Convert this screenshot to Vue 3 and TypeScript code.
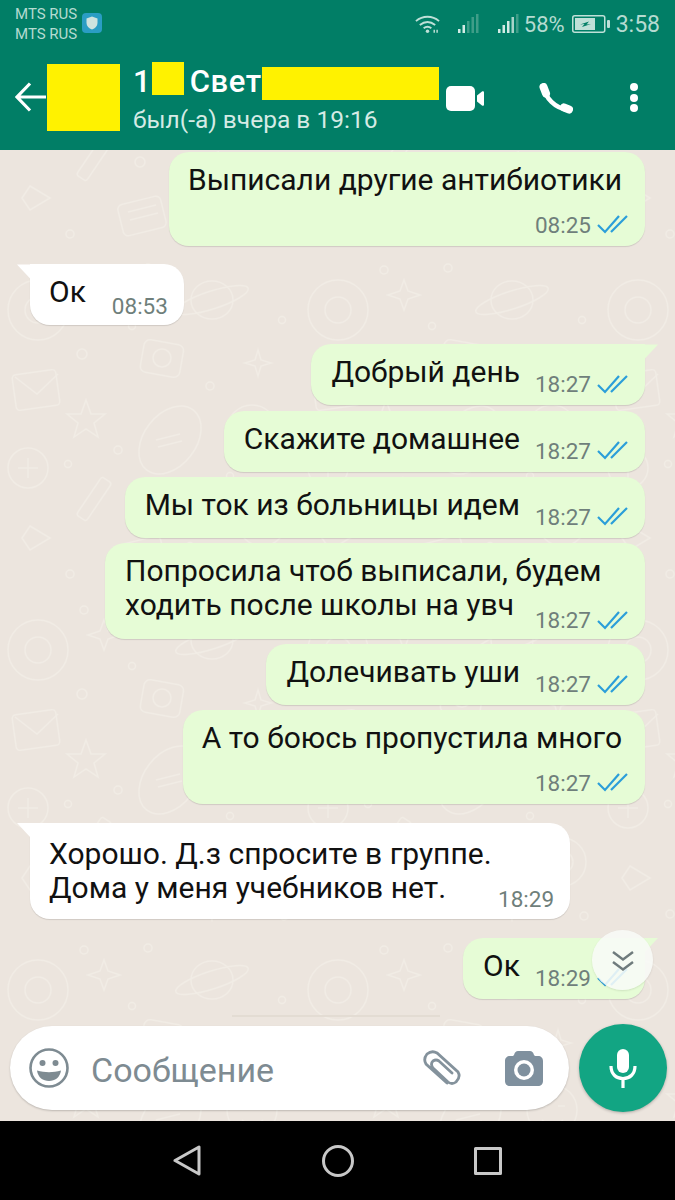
<template>
  <div class="phone">
    <header class="top">
      <div class="status">
        <div class="carriers">
          <div>MTS RUS</div>
          <div>MTS RUS</div>
        </div>
        <svg class="shield" viewBox="0 0 20 20">
          <rect width="20" height="20" rx="4" fill="#2a9dc4" />
          <path d="M10 3.500l5.500 2v4.500c0 3.200-2.400 5.400-5.500 6.500-3.100-1.100-5.500-3.300-5.500-6.500V5.500z" fill="#cfe3df" />
        </svg>
        <div class="status-right">
          <svg class="wifi" viewBox="0 0 26 20" fill="none" stroke="#bfe0d8" stroke-width="2">
            <path d="M1 7c7-6 17-6 24 0M5 11c5-4 11-4 16 0M9 14.500c2.500-2 5.500-2 8 0" />
            <circle cx="13" cy="17.500" r="1.800" fill="#bfe0d8" stroke="none" />
            <path d="M20 19v-3M23 19v-3" stroke-width="1.500" />
          </svg>
          <svg class="signal first" viewBox="0 0 21 20">
            <rect x="0" y="15" width="2.500" height="4" fill="#d3ebe5" />
            <rect x="4.500" y="11" width="2.500" height="8" fill="#d3ebe5" />
            <rect x="9" y="7" width="2.500" height="12" fill="#3f9d88" />
            <rect x="13.500" y="3" width="2.500" height="16" fill="#3f9d88" />
            <rect x="18" y="0" width="2.500" height="19" fill="#3f9d88" />
          </svg>
          <svg class="signal second" viewBox="0 0 21 20">
            <rect x="0" y="15" width="2.500" height="4" fill="#d3ebe5" />
            <rect x="4.500" y="11" width="2.500" height="8" fill="#d3ebe5" />
            <rect x="9" y="7" width="2.500" height="12" fill="#d3ebe5" />
            <rect x="13.500" y="3" width="2.500" height="16" fill="#a8d3c8" />
            <rect x="18" y="0" width="2.500" height="19" fill="#3f9d88" />
          </svg>
          <span class="percent">58%</span>
          <svg class="battery" viewBox="0 0 38 18">
            <rect x="0.750" y="0.750" width="32" height="16.500" rx="2" fill="none" stroke="#bfe0d8" stroke-width="1.500" />
            <rect x="3" y="3" width="20" height="12" fill="#bfe0d8" />
            <rect x="35" y="5" width="3" height="8" rx="1" fill="#bfe0d8" />
            <path d="M8 9.500l9-3-2.500 3 4.500-.5-9 3 2.500-3z" fill="#017e66" />
          </svg>
          <span class="clock">3:58</span>
        </div>
      </div>
      <div class="bar">
        <svg class="back" viewBox="0 0 32 30" fill="none" stroke="#fff" stroke-width="3.200">
          <path d="M31 15H2M15 1.500L2 15l13 13.500" />
        </svg>
        <div class="avatar" />
        <div class="title">
          <div class="name">
            <span>1</span>
            <i class="mark mark-short" />
            <span class="name-part">Свет</span>
            <i class="mark mark-long" />
          </div>
          <div class="seen">был(-а) вчера в 19:16</div>
        </div>
        <svg class="video" viewBox="0 0 38 25">
          <rect width="29" height="25" rx="5" fill="#fff" />
          <path d="M31 9.500l5-4c1-.7 2-.2 2 1v12c0 1.200-1 1.700-2 1l-5-4z" fill="#fff" />
        </svg>
        <svg class="call" viewBox="0 0 34 31" fill="none" stroke="#fff" stroke-linecap="round">
          <path d="M5 4c1 11 11 21 24 23" stroke-width="4.500" />
          <path d="M4.500 4l2.500 6.500M25 24.500l5 2" stroke-width="8" />
        </svg>
        <div class="dots"><i /><i /><i /></div>
      </div>
    </header>

    <main class="chat">
      <svg class="doodles" width="100%" height="100%">
        <defs>
          <pattern id="doodle" width="300" height="340" patternUnits="userSpaceOnUse" x="0" y="100">
            <g fill="none" stroke="#f1ece5" stroke-width="1.500">
              <circle cx="38" cy="60" r="30" />
              <circle cx="38" cy="60" r="13" />
              <path d="M104 30l4 11 12 4-12 4-4 11-4-11-12-4 12-4z" />
              <ellipse cx="212" cy="50" rx="21" ry="19" />
              <ellipse cx="212" cy="50" rx="38" ry="9" transform="rotate(-18 212 50)" />
              <rect x="142" y="92" width="40" height="33" rx="6" transform="rotate(10 162 108)" />
              <circle cx="162" cy="108" r="9" />
              <path d="M258 100l3 10 10 3-10 3-3 10-3-10-10-3 10-3z" />
              <rect x="14" y="122" width="44" height="36" rx="4" transform="rotate(-8 36 140)" />
              <path d="M15 127l22 17 21-20" />
              <path d="M86 150l5 14h14l-11 9 4 14-12-8-12 8 4-14-11-9h14z" />
              <ellipse cx="170" cy="190" rx="26" ry="38" transform="rotate(38 170 190)" />
              <path d="M156 190l24-6M158 197l24-6" />
              <circle cx="252" cy="180" r="25" />
              <path d="M240 176h7M258 176h7M242 190c6 6 15 6 21 0" />
              <circle cx="28" cy="218" r="20" />
              <path d="M18 218h20M28 208v20" />
              <rect x="88" y="226" width="12" height="46" rx="3" transform="rotate(34 94 249)" />
              <path d="M186 256l32-14-10 34-6-13z" />
              <circle cx="262" cy="272" r="24" />
              <circle cx="262" cy="272" r="11" />
              <path d="M30 276l20 12-20 12-8-12z" />
              <rect x="120" y="290" width="44" height="32" rx="5" transform="rotate(-14 142 306)" />
              <path d="M128 302l28-7M130 310l28-7" />
              <path d="M212 306l3 9 9 3-9 3-3 9-3-9-9-3 9-3z" />
              <circle cx="84" cy="20" r="4" />
              <circle cx="132" cy="76" r="3.500" />
              <circle cx="82" cy="104" r="5" />
              <circle cx="282" cy="70" r="3.500" />
              <circle cx="148" cy="18" r="4" />
              <circle cx="118" cy="200" r="4" />
              <circle cx="68" cy="214" r="3.500" />
              <circle cx="210" cy="136" r="4" />
              <circle cx="140" cy="252" r="5" />
              <circle cx="70" cy="324" r="4" />
              <circle cx="230" cy="226" r="3.500" />
              <circle cx="284" cy="326" r="4" />
              <circle cx="190" cy="296" r="3.500" />
            </g>
          </pattern>
        </defs>
        <rect width="100%" height="100%" fill="url(#doodle)" />
      </svg>

      <div class="messages">
        <div
          v-for="(msg, index) in messages"
          :key="index"
          class="bubble"
          :class="{ out: msg.out, tail: msg.tail, spaced: msg.spaced, stacked: msg.stacked, tall: msg.tall }"
        >
          <div v-if="msg.lead" class="text lead">{{ msg.lead }}</div>
          <div class="row" :style="{ gap: (msg.gap ?? 15) + 'px' }">
            <div class="text">{{ msg.text }}</div>
            <div class="meta">
              <span>{{ msg.time }}</span>
              <svg v-if="msg.out" class="ticks" viewBox="0 0 31 19" fill="none" stroke="#2b9ed9" stroke-width="2.200">
                <path d="M1 10l7 7L22 1M14 17L30 1" />
              </svg>
            </div>
          </div>
        </div>
      </div>

      <div class="to-bottom">
        <svg viewBox="0 0 22 20" fill="none" stroke="#6f7b7c" stroke-width="2.400">
          <path d="M1 1l10 7.500L21 1M1 11l10 7.500L21 11" />
        </svg>
      </div>

      <div class="composer">
        <i class="divider" />
        <div class="field">
          <svg class="smile" viewBox="0 0 40 40">
            <circle cx="20" cy="20" r="18.500" fill="none" stroke="#7e8b92" stroke-width="2.600" />
            <circle cx="13.500" cy="15" r="3" fill="#7e8b92" />
            <circle cx="26.500" cy="15" r="3" fill="#7e8b92" />
            <path d="M8 22.500c8 2.200 16 2.200 24 0-1 7-6 10.500-12 10.500S9 29.500 8 22.500z" fill="#7e8b92" />
          </svg>
          <span class="placeholder">Сообщение</span>
          <svg class="clip" viewBox="0 0 40 36" fill="none" stroke="#84929c" stroke-width="2.800" stroke-linecap="round">
            <path d="M25 33L4 14Q1 9 5 4Q10 0 15 3L36 22Q39 27 34 32Q30 35 26 32L11 18Q8 14 11 11Q14 9 17 11L30 23" />
          </svg>
          <svg class="camera" viewBox="0 0 38 35">
            <path
              d="M13 0h12c2 0 3 1 4 4l1 1h3c3 0 5 2 5 5v20c0 3-2 5-5 5H5c-3 0-5-2-5-5V10c0-3 2-5 5-5h3l1-1c1-3 2-4 4-4z"
              fill="#7f909e"
            />
            <circle cx="19" cy="19" r="10" fill="#fff" />
            <circle cx="19" cy="19" r="6.500" fill="#7f909e" />
          </svg>
        </div>
        <div class="mic">
          <svg viewBox="0 0 28 40" fill="none" stroke="#fff" stroke-width="3.200">
            <rect x="8" y="1" width="12" height="24" rx="6" fill="#fff" stroke="none" />
            <path d="M2 18c0 8 5 12.500 12 12.500S26 26 26 18M14 30v10" />
          </svg>
        </div>
      </div>
    </main>

    <nav class="nav">
      <svg viewBox="0 0 28 31" class="nav-back" fill="none" stroke="#c8c8c8" stroke-width="3" stroke-linejoin="round">
        <path d="M26 2v27L2 15.500z" />
      </svg>
      <svg viewBox="0 0 32 32" class="nav-home" fill="none" stroke="#c8c8c8" stroke-width="3">
        <circle cx="16" cy="16" r="14.500" />
      </svg>
      <svg viewBox="0 0 28 28" class="nav-recent" fill="none" stroke="#c8c8c8" stroke-width="3" stroke-linejoin="round">
        <rect x="1.500" y="1.500" width="25" height="25" />
      </svg>
    </nav>
  </div>
</template>

<script setup lang="ts">
interface Message {
  lead?: string
  text: string
  time: string
  gap?: number
  out?: boolean
  tail?: boolean
  spaced?: boolean
  stacked?: boolean
  tall?: boolean
}

const messages: Message[] = [
  { text: 'Выписали другие антибиотики', time: '08:25', out: true, stacked: true },
  { text: 'Ок', time: '08:53', tail: true, spaced: true, gap: 26 },
  { text: 'Добрый день', time: '18:27', out: true, tail: true, spaced: true },
  { text: 'Скажите домашнее', time: '18:27', out: true },
  { text: 'Мы ток из больницы идем', time: '18:27', out: true },
  { lead: 'Попросила чтоб выписали, будем', text: 'ходить после школы на увч', time: '18:27', out: true, gap: 21 },
  { text: 'Долечивать уши', time: '18:27', out: true },
  { text: 'А то боюсь пропустила много', time: '18:27', out: true, stacked: true },
  { lead: 'Хорошо. Д.з спросите в группе.', text: 'Дома у меня учебников нет.', time: '18:29', tail: true, spaced: true, tall: true, gap: 52 },
  { text: 'Ок', time: '18:29', out: true, tail: true, spaced: true },
]
</script>

<style>
html,
body {
  margin: 0;
  background: #000;
}
</style>

<style scoped>
.phone {
  display: flex;
  flex-direction: column;
  width: 675px;
  height: 1200px;
  overflow: hidden;
  font-family: Roboto, "Noto Sans", sans-serif;
}

.top {
  height: 150px;
  flex: none;
  background: #017e66;
  color: #fff;
}

.status {
  display: flex;
  align-items: flex-start;
  height: 56px;
  padding: 3px 15px 0;
  box-sizing: border-box;
  color: #b5dbd1;
}

.carriers {
  font-size: 15px;
  line-height: 20px;
  padding-top: 1px;
  width: 67px;
}

.shield {
  width: 20px;
  height: 20px;
  margin-top: 10px;
}

.status-right {
  display: flex;
  align-items: center;
  margin-left: auto;
  height: 42px;
}

.wifi {
  width: 25px;
  height: 20px;
}

.signal {
  width: 21px;
  height: 20px;
}

.signal.first {
  margin-left: 18px;
}

.signal.second {
  margin-left: 19px;
}

.percent {
  font-size: 22px;
  margin-left: 5px;
}

.battery {
  width: 38px;
  height: 18px;
  margin-left: 7px;
}

.clock {
  font-size: 23px;
  margin-left: 6px;
}

.bar {
  display: flex;
  align-items: flex-start;
  padding-left: 15px;
}

.back {
  width: 32px;
  height: 30px;
  margin-top: 26px;
}

.avatar {
  width: 73px;
  height: 67px;
  margin-top: 8px;
  background: #fff200;
}

.title {
  width: 313px;
  margin-left: 13px;
}

.name {
  display: flex;
  align-items: flex-start;
  height: 44px;
  font-size: 31px;
  font-weight: 500;
  line-height: 52px;
}

.mark {
  display: block;
  flex: none;
  background: #fff200;
}

.mark-short {
  width: 32px;
  height: 33px;
  margin: 6px 0 0 1px;
}

.name-part {
  margin-left: 6px;
  letter-spacing: 0.6px;
}

.mark-long {
  width: 177px;
  height: 33px;
  margin-top: 11px;
}

.seen {
  font-size: 24.500px;
  line-height: 28px;
  margin-top: 6px;
  color: #d5ebe5;
  white-space: nowrap;
}

.video {
  width: 38px;
  height: 25px;
  margin-top: 30px;
}

.call {
  width: 34px;
  height: 31px;
  margin: 27px 0 0 55px;
}

.dots {
  display: flex;
  flex-direction: column;
  gap: 2.500px;
  margin: 27px 0 0 57px;
}

.dots i {
  display: block;
  width: 8px;
  height: 8px;
  border-radius: 50%;
  background: #fff;
}

.chat {
  position: relative;
  flex: 1;
  display: flex;
  flex-direction: column;
  background: #ece5de;
}

.doodles {
  position: absolute;
  inset: 0;
}

.messages {
  position: relative;
  flex: 1;
  display: flex;
  flex-direction: column;
  align-items: flex-start;
  gap: 5.200px;
  padding: 2px 30px 0;
}

.bubble {
  position: relative;
  padding: 11px 16px 10px 19px;
  background: #fff;
  border-radius: 20px;
  box-shadow: 0 1px 1px rgba(0, 0, 0, 0.12);
  color: #111;
}

.bubble.out {
  align-self: flex-end;
  padding: 11px 17px 10px 20px;
  background: #e6fcd6;
}

.bubble.spaced {
  margin-top: 13.800px;
}

.bubble.tail:not(.out) {
  border-top-left-radius: 0;
}

.bubble.tail.out {
  border-top-right-radius: 0;
}

.bubble.tail::before {
  content: "";
  position: absolute;
  top: 0;
  width: 14px;
  height: 15px;
  background: inherit;
}

.bubble.tail:not(.out)::before {
  left: -13px;
  clip-path: polygon(0 0, 100% 0, 100% 100%);
}

.bubble.tail.out::before {
  right: -13px;
  clip-path: polygon(0 0, 100% 0, 0 100%);
}

.row {
  display: flex;
  align-items: flex-end;
}

.bubble.stacked {
  padding-left: 19px;
  padding-right: 23px;
}

.stacked .row {
  flex-direction: column;
  gap: 0 !important;
}

.text {
  font-size: 30px;
  line-height: 34px;
  padding-bottom: 6px;
  white-space: nowrap;
}

.text.lead {
  padding-bottom: 0;
  width: 0;
}

.stacked .text {
  padding-bottom: 16.500px;
}

.tall {
  padding-top: 14px;
}

.lead + .row .text {
  padding-bottom: 7px;
}

.bubble.tall .lead + .row .text {
  padding-bottom: 4px;
}

.meta {
  display: flex;
  align-items: center;
  justify-content: flex-end;
  gap: 6px;
  height: 22px;
  font-size: 22.500px;
  line-height: 22px;
  color: #6f7f7b;
}

.stacked .meta {
  margin-right: -6px;
}

.lead + .row .meta {
  margin-bottom: -2px;
}

.bubble:not(.out) .meta {
  margin-bottom: -1.500px;
}

.ticks {
  width: 31px;
  height: 19px;
}

.to-bottom {
  position: absolute;
  left: 592px;
  top: 780px;
  display: flex;
  align-items: center;
  justify-content: center;
  width: 61px;
  height: 60px;
  border-radius: 50%;
  background: rgba(248, 250, 247, 0.88);
  box-shadow: 0 1px 2px rgba(0, 0, 0, 0.1);
}

.to-bottom svg {
  width: 22px;
  height: 20px;
  margin-left: 1px;
  margin-top: 2px;
}

.composer {
  position: relative;
  display: flex;
  align-items: center;
  gap: 10px;
  padding: 0 8px 9px 10px;
}

.divider {
  position: absolute;
  left: 232px;
  top: -9px;
  width: 208px;
  height: 2px;
  background: #e3dcd3;
}

.field {
  display: flex;
  align-items: center;
  width: 559px;
  height: 84px;
  box-sizing: border-box;
  padding-left: 19px;
  background: #fff;
  border-radius: 42px;
  box-shadow: 0 1px 2px rgba(0, 0, 0, 0.2);
}

.smile {
  width: 40px;
  height: 40px;
}

.placeholder {
  margin-left: 22px;
  padding-top: 3px;
  font-size: 34px;
  color: #7e8b92;
}

.clip {
  width: 40px;
  height: 36px;
  margin-left: auto;
}

.camera {
  width: 38px;
  height: 35px;
  margin: 0 26px 0 43px;
}

.mic {
  display: flex;
  align-items: center;
  justify-content: center;
  width: 88px;
  height: 88px;
  border-radius: 50%;
  background: #12a583;
  box-shadow: 0 1px 3px rgba(0, 0, 0, 0.25);
}

.mic svg {
  width: 28px;
  height: 40px;
}

.nav {
  position: relative;
  display: flex;
  align-items: center;
  height: 79px;
  flex: none;
  background: #000;
}

.nav-back {
  width: 28px;
  height: 31px;
  margin-left: 173px;
}

.nav-home {
  width: 32px;
  height: 32px;
  margin-left: 121px;
}

.nav-recent {
  width: 28px;
  height: 28px;
  margin-left: 120px;
}
</style>
